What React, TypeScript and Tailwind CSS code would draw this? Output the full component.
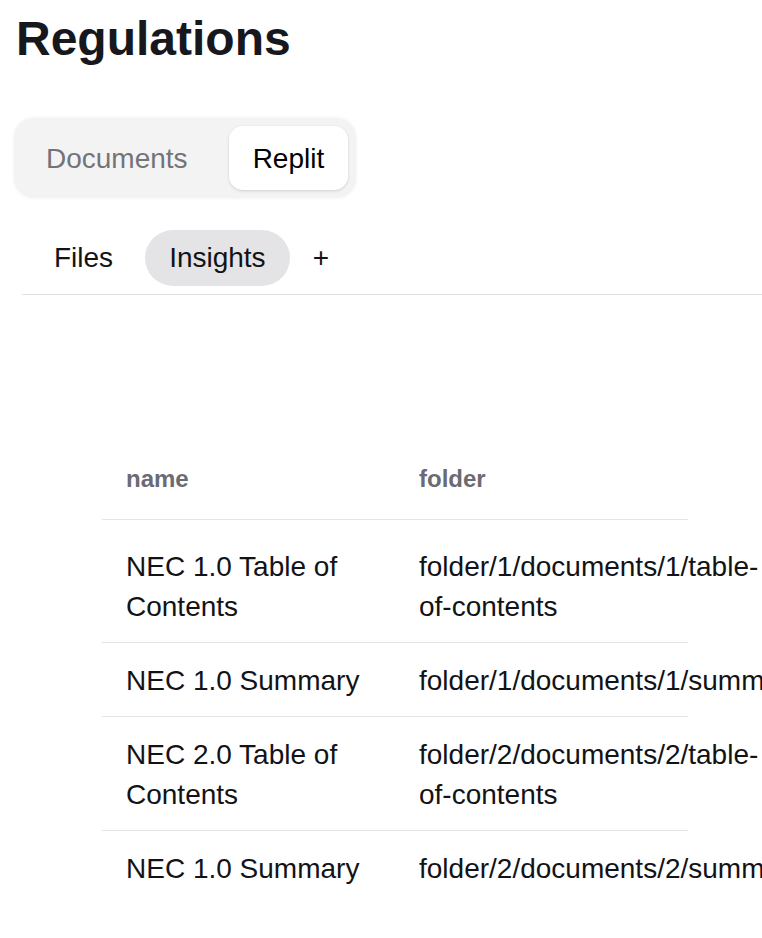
import { useState } from 'react';

type Row = {
	name: string;
	folder: string;
};

const rows: Row[] = [
	{ name: 'NEC 1.0 Table of Contents', folder: 'folder/1/documents/1/table-of-contents' },
	{ name: 'NEC 1.0 Summary', folder: 'folder/1/documents/1/summary' },
	{ name: 'NEC 2.0 Table of Contents', folder: 'folder/2/documents/2/table-of-contents' },
	{ name: 'NEC 1.0 Summary', folder: 'folder/2/documents/2/summary' },
];

export default function App() {
	const [source, setSource] = useState<string>('Replit');
	const [tab, setTab] = useState<string>('Insights');

	return (
		<div className="min-h-screen w-full overflow-hidden bg-white font-['Liberation_Sans',Arial,sans-serif] text-[#131316]">
			<h1 className="pl-4 pt-[15px] text-5xl font-bold text-[#16181d]">Regulations</h1>

			<div className="mt-[55px] px-[14px]">
				<div className="inline-flex gap-[17px] rounded-[20px] bg-[#f3f3f4] p-2 shadow-[0_0_4px_rgba(0,0,0,0.06)]">
					{['Documents', 'Replit'].map((s) => (
						<button
							key={s}
							onClick={() => setSource(s)}
							className={`h-16 rounded-[14px] px-6 pt-[2px] text-[28px] ${
								source == s
									? 'bg-white text-black shadow-[0_1px_3px_rgba(0,0,0,0.15)]'
									: 'text-[#737378]'
							}`}>
							{s}
						</button>
					))}
				</div>
			</div>

			<div className="mt-8 ml-[22px] flex items-center gap-2 border-b border-[#e2e2e2] pb-2 pl-2">
				{['Files', 'Insights'].map((t) => (
					<button
						key={t}
						onClick={() => setTab(t)}
						className={`h-14 rounded-full px-6 text-[28px] text-[#131316] ${
							tab == t ? 'bg-[#e4e4e7]' : ''
						}`}>
						{t}
					</button>
				))}
				<button className="h-14 px-[15px] text-[28px] font-light text-[#131316]">+</button>
			</div>

			{/* insights table */}
			<table className="mt-[152px] ml-[102px] w-[586px] table-fixed border-collapse">
				<thead>
					<tr className="border-b border-[#e4e4e7]">
						<th className="px-6 pt-[16px] pb-[24px] text-left text-[24px] font-bold leading-8 text-[#6b6b73]">
							name
						</th>
						<th className="px-6 pt-[16px] pb-[24px] text-left text-[24px] font-bold leading-8 text-[#6b6b73]">
							folder
						</th>
					</tr>
				</thead>
				<tbody>
					{rows.map((row, index) => (
						<tr
							key={index}
							className={index < rows.length - 1 ? 'border-b border-[#e4e4e7]' : ''}>
							<td
								className={`px-6 align-top text-[28px] leading-10 ${
									index == 0 ? 'pt-[27px] pb-[15px]' : 'pt-[18px] pb-[15px]'
								}`}>
								{row.name}
							</td>
							<td
								className={`px-6 align-top text-[28px] leading-10 ${
									index == 0 ? 'pt-[27px] pb-[15px]' : 'pt-[18px] pb-[15px]'
								}`}>
								{row.folder}
							</td>
						</tr>
					))}
				</tbody>
			</table>
		</div>
	);
}
